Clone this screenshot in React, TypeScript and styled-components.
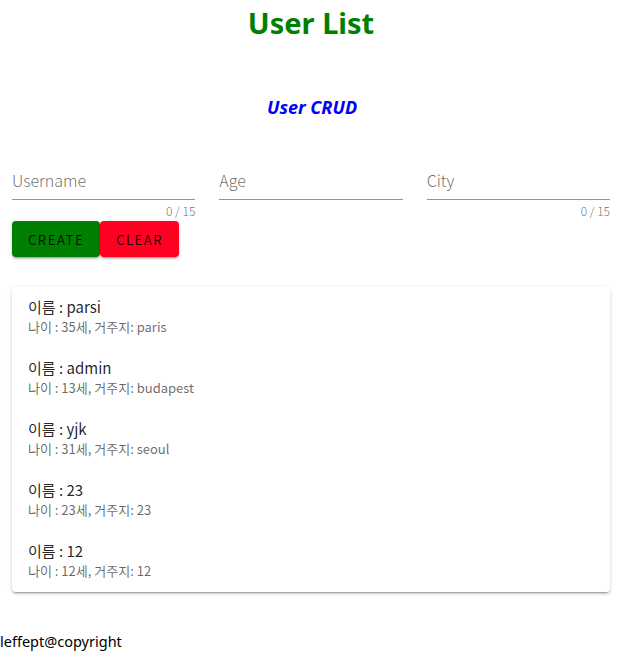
import React from "react";
import styled, { createGlobalStyle } from "styled-components";

const GlobalStyle = createGlobalStyle`
  body {
    margin: 0;
    background: #ffffff;
    font-family: "Noto Sans", "Noto Sans CJK KR", sans-serif;
    color: rgba(0, 0, 0, 0.87);
  }
`;

const Page = styled.div`
  width: 618px;
  display: flex;
  flex-direction: column;
`;

const Title = styled.h1`
  margin: 0;
  text-align: center;
  color: #008000;
  font-size: 29px;
  font-weight: 700;
  line-height: 46px;
  padding-left: 4px;
`;

const SubTitle = styled.h3`
  margin: 49px 0 0;
  padding-left: 6px;
  text-align: center;
  color: #0000ff;
  font-size: 18px;
  font-style: italic;
  font-weight: 700;
  line-height: 24px;
`;

const Form = styled.div`
  margin-top: 41px;
  padding: 0 8px 0 12px;
  display: grid;
  grid-template-columns: repeat(3, 1fr);
  column-gap: 24px;
`;

const Field = styled.div`
  display: flex;
  flex-direction: column;
`;

const InputArea = styled.div`
  height: 40px;
  box-sizing: border-box;
  padding-top: 8px;
  border-bottom: 1px solid rgba(0, 0, 0, 0.42);
`;

const Label = styled.span`
  display: block;
  font-family: "Noto Sans CJK KR", "Noto Sans", sans-serif;
  font-size: 16px;
  font-weight: 300;
  line-height: 24px;
  color: rgba(0, 0, 0, 0.6);
`;

const Counter = styled.div<{ $hidden?: boolean }>`
  height: 14px;
  margin-top: 4px;
  text-align: right;
  font-family: "Noto Sans CJK KR", "Noto Sans", sans-serif;
  font-size: 12px;
  font-weight: 300;
  line-height: 14px;
  color: rgba(0, 0, 0, 0.6);
  visibility: ${(p) => (p.$hidden ? "hidden" : "visible")};
`;

const ButtonRow = styled.div`
  margin-top: 3px;
  padding-left: 12px;
  display: flex;
`;

const ActionButton = styled.button<{ $bg: string }>`
  height: 36px;
  padding: 0 16px;
  border: 0;
  border-radius: 4px;
  background: ${(p) => p.$bg};
  color: rgba(0, 0, 0, 0.87);
  font-family: "Noto Sans CJK KR", "Noto Sans", sans-serif;
  font-size: 13px;
  font-weight: 400;
  letter-spacing: 0.12em;
  box-shadow: 0 3px 1px -2px rgba(0, 0, 0, 0.2), 0 2px 2px 0 rgba(0, 0, 0, 0.14),
    0 1px 5px 0 rgba(0, 0, 0, 0.12);
  cursor: pointer;
`;

const Card = styled.div`
  margin: 30px 8px 0 12px;
  background: #ffffff;
  border-radius: 4px;
  box-shadow: 0 3px 1px -2px rgba(0, 0, 0, 0.2), 0 2px 2px 0 rgba(0, 0, 0, 0.14),
    0 1px 5px 0 rgba(0, 0, 0, 0.12);
  display: flex;
  flex-direction: column;
`;

const Item = styled.div`
  height: 61px;
  box-sizing: border-box;
  padding: 0 16px 2px;
  display: flex;
  flex-direction: column;
  justify-content: center;
  font-family: "Noto Sans CJK KR", "Noto Sans", sans-serif;
`;

const ItemTitle = styled.div`
  font-size: 15px;
  line-height: 20px;
  color: rgba(0, 0, 0, 0.87);
`;

const ItemSub = styled.div`
  font-size: 13px;
  line-height: 20px;
  color: rgba(0, 0, 0, 0.6);
`;

const Footer = styled.footer`
  margin-top: 37px;
  font-size: 14.5px;
  line-height: 24px;
  color: #000000;
`;

const users = [
  { name: "parsi", age: 35, city: "paris" },
  { name: "admin", age: 13, city: "budapest" },
  { name: "yjk", age: 31, city: "seoul" },
  { name: "23", age: 23, city: "23" },
  { name: "12", age: 12, city: "12" },
];

export default function App() {
  return (
    <Page>
      <GlobalStyle />
      <Title>User List</Title>
      <SubTitle>User CRUD</SubTitle>
      <Form>
        <Field>
          <InputArea>
            <Label>Username</Label>
          </InputArea>
          <Counter>0 / 15</Counter>
        </Field>
        <Field>
          <InputArea>
            <Label>Age</Label>
          </InputArea>
          <Counter $hidden>0 / 15</Counter>
        </Field>
        <Field>
          <InputArea>
            <Label>City</Label>
          </InputArea>
          <Counter>0 / 15</Counter>
        </Field>
      </Form>
      <ButtonRow>
        <ActionButton $bg="#008000" type="button">CREATE</ActionButton>
        <ActionButton $bg="#ff0022" type="button">CLEAR</ActionButton>
      </ButtonRow>
      <Card>
        {users.map((u) => (
          <Item key={u.name}>
            <ItemTitle>이름 : {u.name}</ItemTitle>
            <ItemSub>
              나이 : {u.age}세, 거주지: {u.city}
            </ItemSub>
          </Item>
        ))}
      </Card>
      <Footer>leffept@copyright</Footer>
    </Page>
  );
}
